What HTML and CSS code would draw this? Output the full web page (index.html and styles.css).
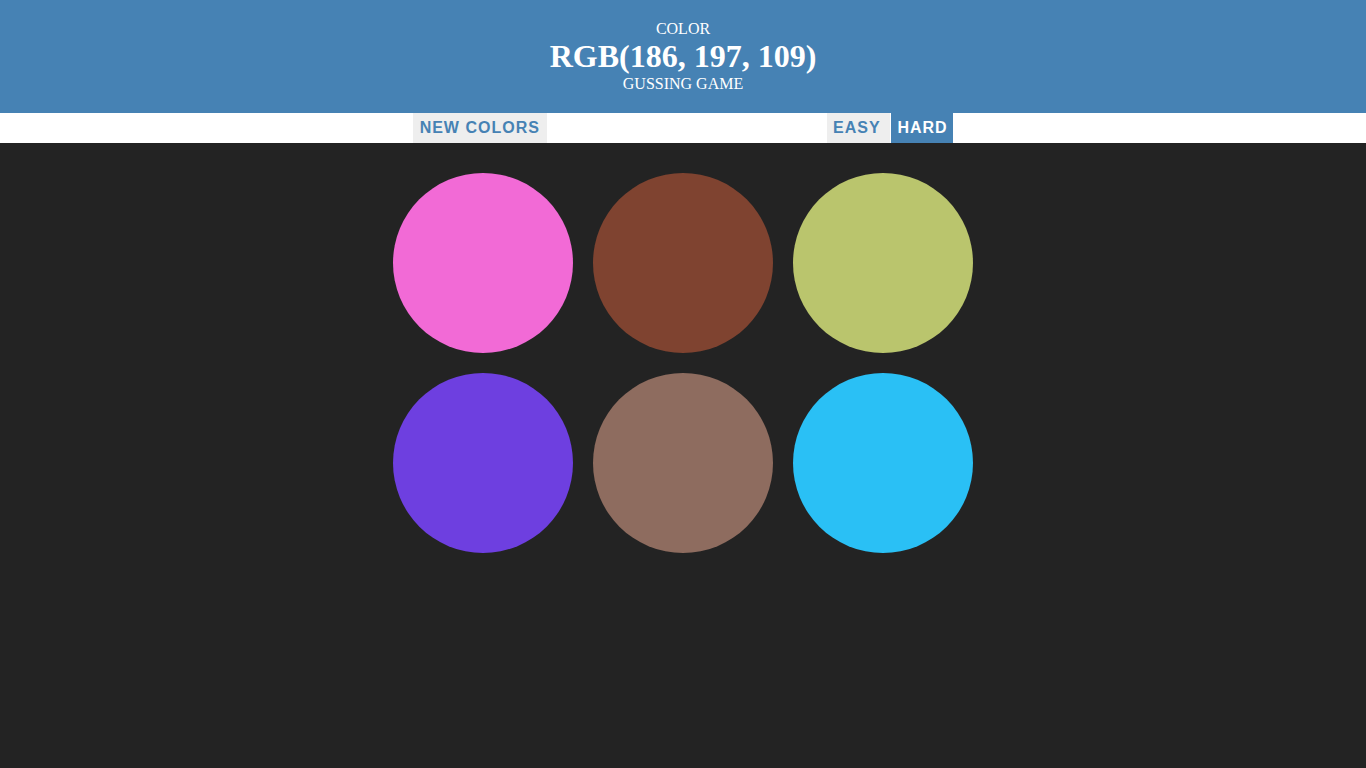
FILE: index.html
```html
<!DOCTYPE html>
<html>
<head>
<meta charset="utf-8">
<title>Color Game</title>
<link rel="stylesheet" href="styles.css">
</head>
<body>
<h1 class="title">
  <span class="line">Color</span>
  <span class="line big">RGB(186, 197, 109)</span>
  <span class="line last">Gussing Game</span>
</h1>
<div class="stripe">
  <div class="stripe-inner">
    <button class="btn btn-new">New Colors</button>
    <span class="message"></span>
    <button class="btn btn-easy">Easy</button>
    <button class="btn btn-hard selected">Hard</button>
  </div>
</div>
<div class="container">
  <div class="square sq1"></div>
  <div class="square sq2"></div>
  <div class="square sq3"></div>
  <div class="square sq4"></div>
  <div class="square sq5"></div>
  <div class="square sq6"></div>
</div>
</body>
</html>
```

FILE: styles.css
```css
html, body {
  margin: 0;
  padding: 0;
}
body {
  background: #232323;
  font-family: "Liberation Serif", "Times New Roman", serif;
  height: 768px;
}
.title {
  margin: 0;
  padding: 20px 0;
  background: #4682b4;
  color: #fff;
  text-align: center;
  text-transform: uppercase;
  font-weight: normal;
  font-size: 16px;
  line-height: 1.1;
  height: 73px;
  display: flex;
  flex-direction: column;
  justify-content: flex-start;
}
.line {
  display: block;
}
.big {
  font-size: 32px;
  font-weight: bold;
  line-height: 36px;
}
.last {
  margin-top: 1px;
}
.stripe {
  background: #fff;
  height: 30px;
}
.stripe-inner {
  width: 540px;
  margin: 0 auto;
  height: 30px;
  display: flex;
}
.btn {
  border: none;
  background: none;
  height: 30px;
  padding: 0 6px;
  margin: 0;
  font-family: "Liberation Sans", Arial, sans-serif;
  font-weight: bold;
  font-size: 16px;
  letter-spacing: 1px;
  text-transform: uppercase;
  color: #4682b4;
  outline: none;
  text-align: center;
  flex: none;
}
.btn-new {
  width: 133.5px;
  background: #eee;
}
.message {
  width: 280.5px;
  flex: none;
}
.btn-easy {
  width: 63px;
  background: #eee;
  text-align: left;
  margin-right: 1px;
}
.btn-hard {
  width: 62px;
  padding: 0 5px 0 6px;
}
.selected {
  background: #4682b4;
  color: #fff;
}
.container {
  width: 600px;
  margin: 20px auto 0;
  display: flex;
  flex-wrap: wrap;
}
.square {
  width: 180px;
  height: 180px;
  margin: 10px;
  border-radius: 50%;
}
.sq1 { background: rgb(242, 106, 214); }
.sq2 { background: rgb(127, 67, 48); }
.sq3 { background: rgb(186, 197, 109); }
.sq4 { background: rgb(110, 63, 224); }
.sq5 { background: rgb(142, 108, 95); }
.sq6 { background: rgb(42, 192, 245); }
```
